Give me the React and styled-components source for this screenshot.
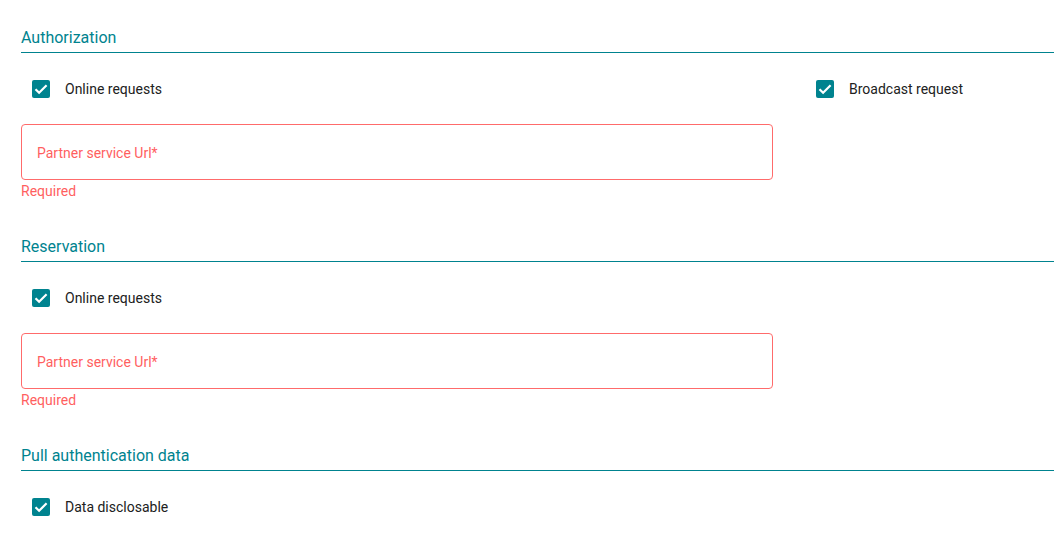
import React from "react";
import styled, { createGlobalStyle } from "styled-components";

const GlobalStyle = createGlobalStyle`
  body {
    margin: 0;
    background: #ffffff;
    font-family: Roboto, "Noto Sans", Arial, sans-serif;
  }
`;

const Page = styled.div`
  padding: 26px 0 0 21px;
`;

const Section = styled.section`
  margin-bottom: 36px;
  &:last-child {
    margin-bottom: 0;
  }
`;

const SectionTitle = styled.h3`
  margin: 0;
  font-size: 16px;
  font-weight: 400;
  line-height: 24px;
  color: #00838f;
  padding-bottom: 2px;
  border-bottom: 1px solid #00838f;
`;

const Grid = styled.div`
  display: grid;
  grid-template-columns: 752px 1fr;
  column-gap: 32px;
  padding-top: 16px;
`;

const CheckRow = styled.label`
  display: flex;
  align-items: center;
  height: 40px;
  grid-column: ${(p) => p.col || 1};
  font-size: 14px;
  color: #212121;
  cursor: pointer;
`;

const BoxWrap = styled.span`
  width: 40px;
  height: 40px;
  display: flex;
  align-items: center;
  justify-content: center;
  margin-right: 4px;
`;

const Box = styled.span`
  width: 18px;
  height: 18px;
  border-radius: 2px;
  background: #00838f;
  display: flex;
  align-items: center;
  justify-content: center;
`;

const Field = styled.div`
  grid-column: 1;
  margin-top: 15px;
`;

const Input = styled.input`
  box-sizing: border-box;
  width: 100%;
  height: 56px;
  border: 1px solid #ff6b6b;
  border-radius: 4px;
  padding: 2px 15px 0;
  font-family: inherit;
  font-size: 14px;
  outline: none;
  &::placeholder {
    color: #ff5f5f;
  }
`;

const ErrorText = styled.div`
  margin-top: 3px;
  font-size: 14px;
  line-height: 16px;
  color: #ff5f5f;
`;

const Checkbox = ({ label, col }) => (
  <CheckRow col={col}>
    <BoxWrap>
      <Box>
        <svg width="18" height="18" viewBox="0 0 18 18">
          <path
            d="M3.5 9.2l3.6 3.6L14.6 5.3"
            fill="none"
            stroke="#fff"
            strokeWidth="2.2"
          />
        </svg>
      </Box>
    </BoxWrap>
    {label}
  </CheckRow>
);

const UrlField = () => (
  <Field>
    <Input placeholder="Partner service Url*" />
    <ErrorText>Required</ErrorText>
  </Field>
);

export default function App() {
  return (
    <Page>
      <GlobalStyle />
      <Section>
        <SectionTitle>Authorization</SectionTitle>
        <Grid>
          <Checkbox label="Online requests" />
          <Checkbox label="Broadcast request" col={2} />
          <UrlField />
        </Grid>
      </Section>
      <Section>
        <SectionTitle>Reservation</SectionTitle>
        <Grid>
          <Checkbox label="Online requests" />
          <UrlField />
        </Grid>
      </Section>
      <Section>
        <SectionTitle>Pull authentication data</SectionTitle>
        <Grid>
          <Checkbox label="Data disclosable" />
        </Grid>
      </Section>
    </Page>
  );
}
